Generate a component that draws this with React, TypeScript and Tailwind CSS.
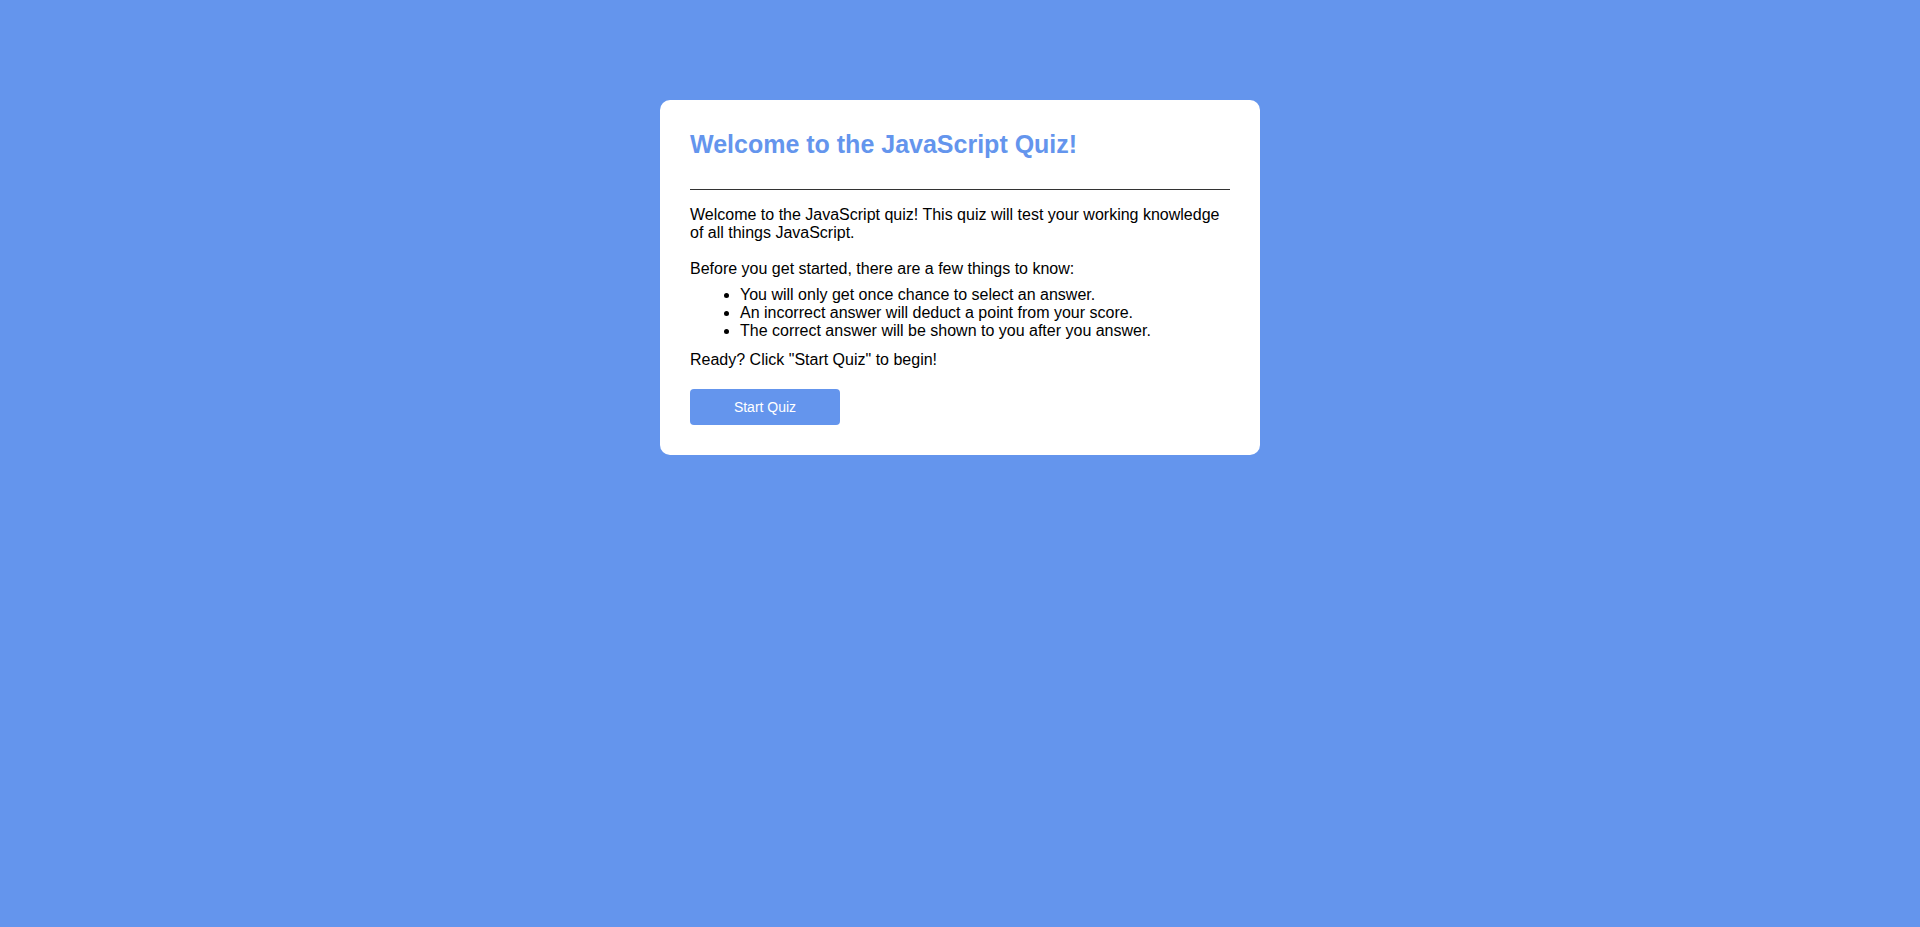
import React from 'react';

const rules = [
  'You will only get once chance to select an answer.',
  'An incorrect answer will deduct a point from your score.',
  'The correct answer will be shown to you after you answer.',
];

const App: React.FC = () => {
  return (
    <div
      className="min-h-screen w-full bg-[#6495ed] pt-[100px] text-black"
      style={{ fontFamily: '"Liberation Sans", Arial, sans-serif' }}
    >
      <div className="mx-auto w-[600px] rounded-[10px] bg-white p-[30px]">
        <h1 className="text-[25px] font-bold leading-[normal] text-[#6495ed]">
          Welcome to the JavaScript Quiz!
        </h1>
        <hr className="mt-[30px] border-t border-[#333]" />
        <p className="mt-[16px] text-[16px] leading-[normal]">
          Welcome to the JavaScript quiz! This quiz will test your working knowledge of all
          things JavaScript.
        </p>
        <p className="mt-[18px] text-[16px] leading-[normal]">
          Before you get started, there are a few things to know:
        </p>
        <ul className="mt-[8px] list-disc pl-[50px] text-[16px] leading-[normal]">
          {rules.map((r) => (
            <li key={r}>{r}</li>
          ))}
        </ul>
        <p className="mt-[11px] text-[16px] leading-[normal]">Ready? Click "Start Quiz" to begin!</p>
        <button className="mt-[20px] h-[36px] w-[150px] rounded-[4px] bg-[#6495ed] text-[14px] text-white">
          Start Quiz
        </button>
      </div>
    </div>
  );
};

export default App;
